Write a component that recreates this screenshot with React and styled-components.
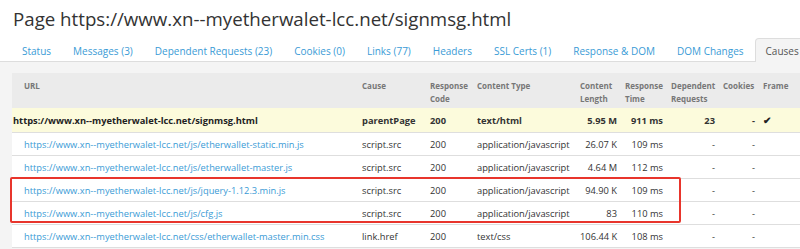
import React from "react";
import styled, { createGlobalStyle } from "styled-components";

const GlobalStyle = createGlobalStyle`
  html, body {
    margin: 0;
    padding: 0;
    background: #ffffff;
    font-family: "Open Sans", "Liberation Sans", Arial, sans-serif;
    color: #333333;
    overflow: hidden;
  }
`;

const Page = styled.div`
  width: 800px;
  height: 249px;
  overflow: hidden;
  display: flex;
  flex-direction: column;
`;

const Title = styled.h1`
  margin: 0;
  padding: 5px 0 0 13px;
  font-size: 18.7px;
  line-height: 28px;
  font-weight: 400;
  color: #333333;
  white-space: nowrap;
`;

const Tabs = styled.ul`
  list-style: none;
  margin: 5px 0 0 0;
  padding: 0 0 0 11px;
  display: flex;
  border-bottom: 1px solid #dddddd;
  height: 23px;
  white-space: nowrap;
`;

const Tab = styled.li`
  padding: 0 10px;
  font-size: 10px;
  line-height: 24px;
  color: ${(p) => (p.$active ? "#555555" : "#3a9bd6")};
  background: ${(p) => (p.$active ? "#f4f4f4" : "transparent")};
  border: 1px solid ${(p) => (p.$active ? "#dddddd" : "transparent")};
  border-bottom: none;
  border-radius: 4px 4px 0 0;
  margin-bottom: -1px;
  height: 24px;
  box-sizing: border-box;
`;

const Panel = styled.div`
  flex: 1;
  background: #f4f4f4;
  padding: 11px 0 0 12px;
  overflow: hidden;
`;

const TableWrap = styled.div`
  position: relative;
  width: 797px;
`;

const Table = styled.table`
  border-collapse: collapse;
  table-layout: fixed;
  width: 797px;
  font-size: 9.3px;
`;

const HeadCell = styled.th`
  background: #ebebeb;
  color: #777777;
  font-size: 8px;
  font-weight: 700;
  text-align: left;
  vertical-align: top;
  line-height: 13px;
  padding: 6px 4px 3px 4px;
  height: 26px;
  padding-left: ${(p) => (p.$first ? "12px" : "4px")};
  white-space: nowrap;
`;

const Row = styled.tr`
  background: ${(p) => (p.$parent ? "#fcfbdc" : "#ffffff")};
  border-bottom: 1px solid #dedede;
  font-weight: ${(p) => (p.$parent ? 700 : 400)};
`;

const Cell = styled.td`
  height: ${(p) => (p.$parent ? "24px" : "22px")};
  padding: 0 4px;
  text-align: ${(p) => (p.$right ? "right" : "left")};
  white-space: nowrap;
  overflow: hidden;
  color: #333333;
`;

const UrlCell = styled(Cell)`
  padding: 0 4px 0 ${(p) => (p.$parent ? "1px" : "12px")};
  color: ${(p) => (p.$parent ? "#222222" : "#3a9bd6")};
`;

const Check = styled.span`
  font-size: 10px;
  color: #222222;
`;

const Highlight = styled.div`
  position: absolute;
  left: -2px;
  top: 104px;
  width: 671px;
  height: 46px;
  border: 2px solid #e8352c;
  border-radius: 2px;
  box-sizing: border-box;
  pointer-events: none;
`;

const tabs = [
  "Status",
  "Messages (3)",
  "Dependent Requests (23)",
  "Cookies (0)",
  "Links (77)",
  "Headers",
  "SSL Certs (1)",
  "Response & DOM",
  "DOM Changes",
  "Causes",
];

const base = "https://www.xn--myetherwalet-lcc.net";

const rows = [
  { url: base + "/signmsg.html", cause: "parentPage", code: "200", type: "text/html", length: "5.95 M", time: "911 ms", deps: "23", cookies: "-", frame: true, parent: true },
  { url: base + "/js/etherwallet-static.min.js", cause: "script.src", code: "200", type: "application/javascript", length: "26.07 K", time: "109 ms", deps: "-", cookies: "-" },
  { url: base + "/js/etherwallet-master.js", cause: "script.src", code: "200", type: "application/javascript", length: "4.64 M", time: "112 ms", deps: "-", cookies: "-" },
  { url: base + "/js/jquery-1.12.3.min.js", cause: "script.src", code: "200", type: "application/javascript", length: "94.90 K", time: "109 ms", deps: "-", cookies: "-" },
  { url: base + "/js/cfg.js", cause: "script.src", code: "200", type: "application/javascript", length: "83", time: "110 ms", deps: "-", cookies: "-" },
  { url: base + "/css/etherwallet-master.min.css", cause: "link.href", code: "200", type: "text/css", length: "106.44 K", time: "108 ms", deps: "-", cookies: "-" },
];

const widths = [346, 68, 47, 103, 45, 46, 52, 40, 50];

export default function App() {
  return (
    <Page>
      <GlobalStyle />
      <Title>Page https://www.xn--myetherwalet-lcc.net/signmsg.html</Title>
      <Tabs>
        {tabs.map((t) => (
          <Tab key={t} $active={t === "Causes"}>
            {t}
          </Tab>
        ))}
      </Tabs>
      <Panel>
        <TableWrap>
          <Table>
            <colgroup>
              {widths.map((w, i) => (
                <col key={i} style={{ width: w }} />
              ))}
            </colgroup>
            <thead>
              <tr>
                <HeadCell $first>URL</HeadCell>
                <HeadCell>Cause</HeadCell>
                <HeadCell>Response<br />Code</HeadCell>
                <HeadCell>Content Type</HeadCell>
                <HeadCell>Content<br />Length</HeadCell>
                <HeadCell>Response<br />Time</HeadCell>
                <HeadCell>Dependent<br />Requests</HeadCell>
                <HeadCell>Cookies</HeadCell>
                <HeadCell>Frame</HeadCell>
              </tr>
            </thead>
            <tbody>
              {rows.map((r) => {
                const p = r.parent;
                return (
                  <Row key={r.url} $parent={p}>
                    <UrlCell $parent={p}>{r.url}</UrlCell>
                    <Cell $parent={p}>{r.cause}</Cell>
                    <Cell $parent={p}>{r.code}</Cell>
                    <Cell $parent={p}>{r.type}</Cell>
                    <Cell $parent={p} $right>{r.length}</Cell>
                    <Cell $parent={p} $right>{r.time}</Cell>
                    <Cell $parent={p} $right>{r.deps}</Cell>
                    <Cell $parent={p} $right>{r.cookies}</Cell>
                    <Cell $parent={p}>{r.frame ? <Check>{"\u2714"}</Check> : ""}</Cell>
                  </Row>
                );
              })}
            </tbody>
          </Table>
          <Highlight />
        </TableWrap>
      </Panel>
    </Page>
  );
}
